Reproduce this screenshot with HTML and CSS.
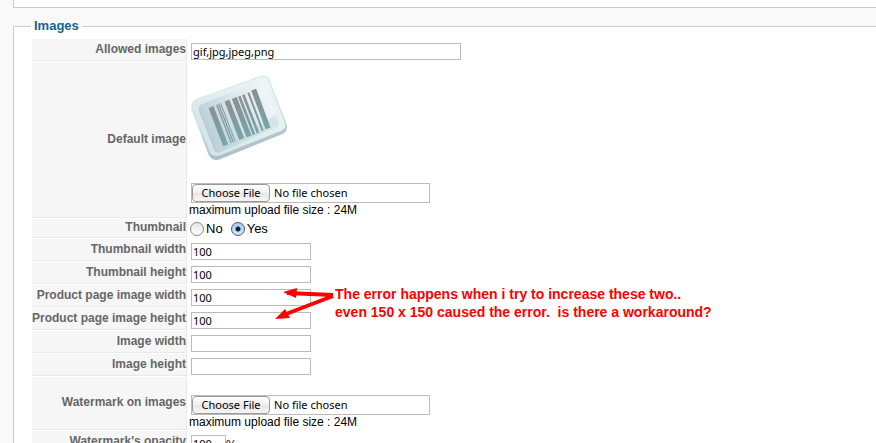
FILE: index.html
```html
<!DOCTYPE html>
<html lang="en">
<head>
  <meta charset="UTF-8" />
  <meta name="viewport" content="width=device-width, initial-scale=1.0" />
  <title>Images configuration</title>
  <link rel="stylesheet" href="styles.css">
</head>
<body>
  <form class="config">
    <div class="previous-panel"></div>

    <fieldset class="panel">
      <legend>Images</legend>
      <table class="admintable">
        <tr>
          <td class="key"><label for="allowed">Allowed images</label></td>
          <td><input type="text" id="allowed" class="wide" value="gif,jpg,jpeg,png" /></td>
        </tr>
        <tr class="default-row">
          <td class="key"><label for="default_image">Default image</label></td>
          <td>
            <svg class="barcode" viewBox="30 30 294 264" role="img" aria-label="Barcode">
              <defs>
                <linearGradient id="edge" x1="0.3" y1="0" x2="0.6" y2="1">
                  <stop offset="0" stop-color="#dfeced" />
                  <stop offset="0.5" stop-color="#d0e2e4" />
                  <stop offset="1" stop-color="#a0b7bd" />
                </linearGradient>
                <linearGradient id="rim" x1="0" y1="1" x2="1" y2="0">
                  <stop offset="0" stop-color="#cfe2e4" />
                  <stop offset="1" stop-color="#eff9f8" />
                </linearGradient>
                <linearGradient id="face" x1="0" y1="0.7" x2="1" y2="0.2">
                  <stop offset="0" stop-color="#b5cad5" />
                  <stop offset="0.5" stop-color="#d8e5ea" />
                  <stop offset="1" stop-color="#f5fbfb" />
                </linearGradient>
                <linearGradient id="bars" gradientUnits="userSpaceOnUse" x1="150" y1="95" x2="185" y2="220">
                  <stop offset="0" stop-color="#8c8f92" />
                  <stop offset="1" stop-color="#78a5a9" />
                </linearGradient>
              </defs>
              <path fill="url(#edge)" d="M50 101 L238 34 Q260 26 270 48 L320 178 Q325 198 306 208 L120 283 Q97 290 86 270 L35 137 Q28 111 50 101Z" />
              <path fill="url(#rim)" d="M55 103 L240 37 Q257 31 265 48 L315 175 Q320 190 304 197 L117 272 Q99 277 90 262 L40 133 Q36 111 55 103Z" />
              <path fill="url(#face)" d="M68 116 L235 52 Q248 48 254 62 L295 169 Q299 181 286 187 L122 261 Q108 267 102 254 L56 137 Q53 122 68 116Z" />
              <path fill="#c3d6dd" opacity="0.5" d="M104 225 Q180 220 287 150 L295 169 Q299 181 286 187 L122 261 Q112 265 104 250Z" />
              <g fill="none" stroke="url(#bars)">
                <path stroke-width="16" d="M93 126 l44 115 M141 107 l44 115 M163 99 l44 115 M221 74 l43 116" />
                <path stroke-width="8" d="M178 94 l44 115 M190 89 l44 115" />
                <path stroke-width="6" d="M205 83 l43 114" />
                <path stroke-width="4" d="M110 119 l44 115 M116 117 l44 115" />
                <path stroke-width="3" d="M122 115 l44 115" />
              </g>
            </svg>
            <input type="file" id="default_image" />
            <div class="note">maximum upload file size : 24M</div>
          </td>
        </tr>
        <tr class="radio-row">
          <td class="key">Thumbnail</td>
          <td>
            <div class="radios">
              <input type="radio" name="thumbnail" id="thumb_no" /><label for="thumb_no">No</label>
              <input type="radio" name="thumbnail" id="thumb_yes" checked /><label for="thumb_yes">Yes</label>
            </div>
          </td>
        </tr>
        <tr>
          <td class="key"><label for="thumb_x">Thumbnail width</label></td>
          <td><input type="text" id="thumb_x" value="100" /></td>
        </tr>
        <tr>
          <td class="key"><label for="thumb_y">Thumbnail height</label></td>
          <td><input type="text" id="thumb_y" value="100" /></td>
        </tr>
        <tr>
          <td class="key"><label for="product_x">Product page image width</label></td>
          <td class="annotated">
            <input type="text" id="product_x" value="100" />
            <div class="annotation">
              <svg class="arrows" width="61" height="36" viewBox="0 0 61 36" aria-hidden="true">
                <path fill="none" stroke="#f00" stroke-width="4" d="M13 8 L59 10 M12 29 L59 11" />
                <path fill="#f00" d="M9 7 L23 3 L22 13Z M1 34 L11 24 L16 33Z" />
              </svg>
              <p>The error happens when i try to increase these two..<br />even 150 x 150 caused the error.&nbsp; is there a workaround?</p>
            </div>
          </td>
        </tr>
        <tr>
          <td class="key"><label for="product_y">Product page image height</label></td>
          <td><input type="text" id="product_y" value="100" /></td>
        </tr>
        <tr>
          <td class="key"><label for="image_x">Image width</label></td>
          <td><input type="text" id="image_x" /></td>
        </tr>
        <tr>
          <td class="key"><label for="image_y">Image height</label></td>
          <td><input type="text" id="image_y" /></td>
        </tr>
        <tr class="watermark-row">
          <td class="key"><label for="watermark">Watermark on images</label></td>
          <td>
            <input type="file" id="watermark" />
            <div class="note">maximum upload file size : 24M</div>
          </td>
        </tr>
        <tr>
          <td class="key"><label for="opacity">Watermark's opacity</label></td>
          <td><div class="percent"><input type="text" id="opacity" class="small" value="100" />%</div></td>
        </tr>
      </table>
    </fieldset>
  </form>
</body>
</html>
```
FILE: styles.css
```css
* {
  box-sizing: border-box;
}
body {
  margin: 0;
  height: 100vh;
  overflow: hidden;
  background-color: #f9f9f9;
  font-family: "Liberation Sans", Arial, sans-serif;
  font-size: 12px;
  color: #000;
}

/* Panels run past the right edge of the window */
.config {
  margin: 0 -20px 0 13px;
}
.previous-panel {
  height: 8px;
  background-color: #fff;
  border: 1px solid #ccc;
  border-top: 0;
}
.panel {
  margin: 10px 0 0;
  padding: 4px 17px 20px;
  background-color: #fff;
  border: 1px solid #ccc;
}
.panel legend {
  padding: 0 3px;
  font-size: 13px;
  line-height: 16px;
  font-weight: bold;
  color: #146295;
}

/* Settings table */
.admintable {
  border-spacing: 1px;
}
.admintable td {
  height: 22px;
  padding: 0;
}
.admintable td.key {
  width: 155px;
  padding-bottom: 2px;
  background-color: #f6f6f6;
  border-right: 1px solid #e9e9e9;
  border-bottom: 1px solid #e9e9e9;
  color: #666;
  font-weight: bold;
  text-align: right;
  white-space: nowrap;
}
.admintable .radio-row td {
  height: 19px;
}
.admintable .default-row td {
  height: 156px;
}
.admintable .watermark-row td {
  height: 53px;
}
.default-row td,
.watermark-row td {
  vertical-align: bottom;
}
.default-row td.key,
.watermark-row td.key {
  vertical-align: middle;
}

/* Fields */
input[type="text"],
input[type="file"] {
  display: block;
  margin: 3px 0 0 3px;
  border: 1px solid #bbb;
  background-color: #fff;
  font-family: "Noto Sans", sans-serif;
  font-size: 11px;
  color: #000;
}
input[type="text"] {
  width: 120px;
  height: 17px;
  padding: 0 1px;
}
input[type="text"].wide {
  width: 270px;
}
input[type="text"].small {
  width: 35px;
}
input[type="file"] {
  width: 239px;
  height: 20px;
  line-height: 18px;
}
input[type="file"]::file-selector-button {
  width: 78px;
  height: 18px;
  margin: 0 4px 0 0;
  padding: 0;
  border: 1px solid #999;
  border-radius: 4px;
  background: linear-gradient(#fff, #f0f0f0 50%, #e6e6e6 50%, #f6f6f6);
  font-family: inherit;
  font-size: 11px;
  line-height: 16px;
}
.barcode {
  display: block;
  width: 98px;
  height: 88px;
  margin: 0 0 20px 2px;
}
.note {
  padding-left: 1px;
  line-height: 15px;
}
.percent {
  display: flex;
  align-items: flex-end;
}

/* Radio buttons */
.radios {
  display: flex;
  align-items: center;
  padding-left: 2px;
  font-size: 13px;
  line-height: 15px;
}
.radios input {
  appearance: none;
  width: 14px;
  height: 14px;
  margin: 0 2px 0 0;
  border: 1px solid #888;
  border-radius: 50%;
  background: linear-gradient(#e6e6e6, #fff);
}
.radios label {
  margin-right: 8px;
}
.radios input:checked {
  border-color: #557;
  background: radial-gradient(circle, #123 0 2px, transparent 3px), linear-gradient(#a9c8ee, #cdeaff);
}

/* Red note laid over the fields */
.annotated {
  position: relative;
}
.annotation {
  position: absolute;
  top: 0;
  left: 86px;
  display: flex;
  color: #f00;
  font-size: 14px;
  font-weight: bold;
  line-height: 18px;
  white-space: nowrap;
}
.annotation p {
  margin: 0;
}
```
